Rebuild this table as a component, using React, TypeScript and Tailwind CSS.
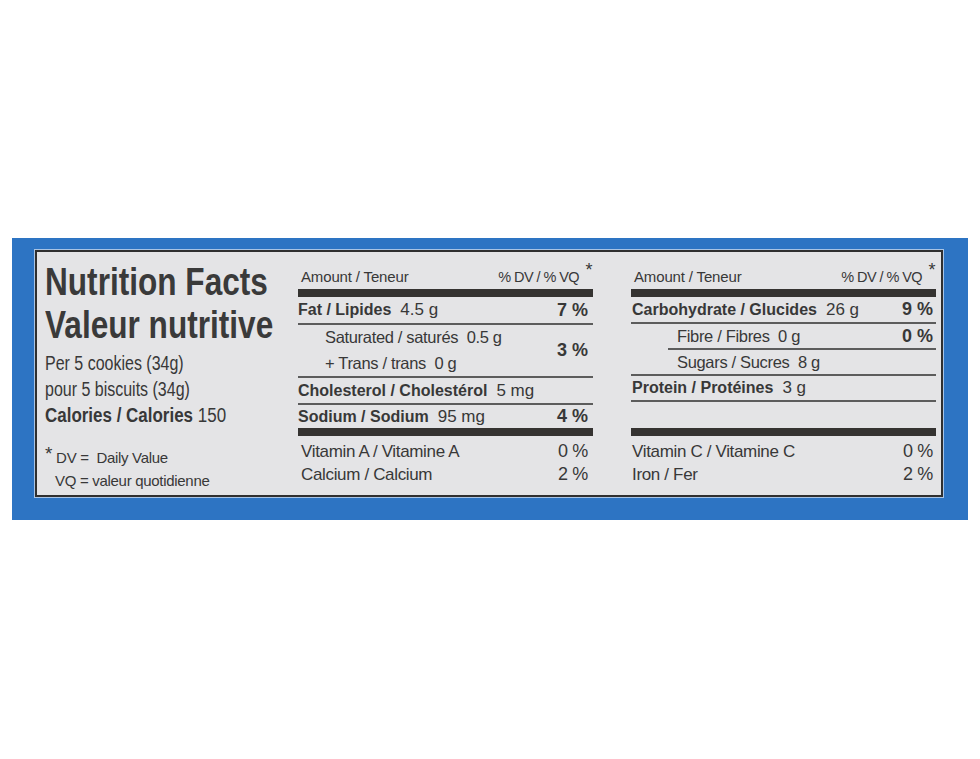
import type { ReactNode } from "react";

// Étiquette "Nutrition Facts / Valeur nutritive" sur bandeau bleu.

function TableHeader() {
  return (
    <div className="flex h-[37px] items-end justify-between pb-[4px] text-[14.5px] leading-[16px]">
      <span className="pl-[3px] text-[15px] tracking-[-0.01em]">Amount / Teneur</span>
      <span className="relative pr-[14px] tracking-[-0.04em]">
        % DV / % VQ
        <span className="absolute -top-[7px] right-[1px] text-[18px]">*</span>
      </span>
    </div>
  );
}

function Bar() {
  return <div className="h-[8px] bg-[#353331]" />;
}

function Label({ name, value }: { name: string; value?: string }) {
  return (
    <span className="whitespace-nowrap">
      <span className="text-[16px] font-bold">{name}</span>
      {value ? <span className="ml-[9px] text-[17px]">{value}</span> : null}
    </span>
  );
}

function Pct({ children, bold = true }: { children: ReactNode; bold?: boolean }) {
  return (
    <span className={bold ? "text-[18px] font-bold" : "text-[18px]"}>
      {children}
    </span>
  );
}

function LeftColumn() {
  return (
    <div className="w-[261px] pl-[8px] pt-[8px]">
      <div className="origin-left scale-x-[0.81] whitespace-nowrap text-[39px] font-bold leading-[43px] text-[#3a3a3a]">
        <div>Nutrition Facts</div>
        <div>Valeur nutritive</div>
      </div>
      <div className="mt-[4px] origin-left scale-x-[0.82] whitespace-nowrap text-[19.5px] leading-[26px]">
        <div>Per 5 cookies (34g)</div>
        <div>pour 5 biscuits (34g)</div>
      </div>
      <div className="origin-left scale-x-[0.87] whitespace-nowrap text-[19.5px] leading-[27px]">
        <span className="font-bold">Calories / Calories</span> 150
      </div>
      <div className="mt-[16px] whitespace-nowrap text-[15px] leading-[23px] tracking-[-0.02em]">
        <div>
          <span className="relative -top-[3px] mr-[4px] text-[19px]">*</span>
          DV = &nbsp;Daily Value
        </div>
        <div className="pl-[10px]">VQ = valeur quotidienne</div>
      </div>
    </div>
  );
}

function MiddleTable() {
  return (
    <div className="w-[295px]">
      <TableHeader />
      <Bar />
      <div className="flex h-[28px] justify-between border-b-2 border-[#5c5c5c] pr-[5px] leading-[26px]">
        <Label name="Fat / Lipides" value="4.5 g" />
        <Pct>7 %</Pct>
      </div>
      <div className="flex h-[53px] items-center justify-between border-b-2 border-[#5c5c5c] pr-[5px]">
        <div className="self-start pl-[27px] text-[16.5px] tracking-[-0.02em]">
          <div className="leading-[25px]">Saturated / saturés &nbsp;0.5 g</div>
          <div className="leading-[26px]">+ Trans / trans &nbsp;0 g</div>
        </div>
        <Pct>3 %</Pct>
      </div>
      <div className="h-[27px] border-b-2 border-[#5c5c5c] leading-[25px]">
        <Label name="Cholesterol / Cholestérol" value="5 mg" />
      </div>
      <div className="flex h-[23px] justify-between pr-[5px] leading-[23px]">
        <Label name="Sodium / Sodium" value="95 mg" />
        <Pct>4 %</Pct>
      </div>
      <Bar />
      <div className="pt-[4px] pl-[3px] pr-[5px] text-[17px] leading-[23px] tracking-[-0.02em]">
        <div className="flex justify-between">
          <span>Vitamin A / Vitamine A</span>
          <Pct bold={false}>0 %</Pct>
        </div>
        <div className="flex justify-between">
          <span>Calcium / Calcium</span>
          <Pct bold={false}>2 %</Pct>
        </div>
      </div>
    </div>
  );
}

function RightTable() {
  return (
    <div className="ml-[38px] w-[305px]">
      <TableHeader />
      <Bar />
      <div className="flex h-[27px] justify-between border-b-2 border-[#5c5c5c] pl-[1px] pr-[3px] leading-[25px]">
        <Label name="Carbohydrate / Glucides" value="26 g" />
        <Pct>9 %</Pct>
      </div>
      <div className="ml-[37px] flex h-[26px] justify-between border-b-2 border-[#5c5c5c] pl-[9px] pr-[3px] leading-[24px]">
        <span className="text-[16.5px] tracking-[-0.02em]">Fibre / Fibres &nbsp;0 g</span>
        <Pct>0 %</Pct>
      </div>
      <div className="h-[26px] border-b-2 border-[#5c5c5c] pl-[46px] text-[16.5px] leading-[24px] tracking-[-0.02em]">
        Sugars / Sucres &nbsp;8 g
      </div>
      <div className="h-[26px] border-b-2 border-[#5c5c5c] pl-[1px] leading-[24px]">
        <Label name="Protein / Protéines" value="3 g" />
      </div>
      <div className="h-[26px]" />
      <Bar />
      <div className="pt-[4px] pl-[1px] pr-[3px] text-[17px] leading-[23px] tracking-[-0.02em]">
        <div className="flex justify-between">
          <span>Vitamin C / Vitamine C</span>
          <Pct bold={false}>0 %</Pct>
        </div>
        <div className="flex justify-between">
          <span>Iron / Fer</span>
          <Pct bold={false}>2 %</Pct>
        </div>
      </div>
    </div>
  );
}

export default function App() {
  return (
    <div className="min-h-[759px] w-[980px] bg-white pl-[12px] pt-[238px] font-['Liberation_Sans',Arial,sans-serif] text-[#383838]">
      <div className="h-[282px] w-[956px] bg-[#2d74c3] pl-[23px] pt-[12px]">
        <div className="flex h-[247px] w-[908px] border-2 border-[#2f2f2f] bg-[#e4e4e6] shadow-[0_0_0_1px_#a9c4e4]">
          <LeftColumn />
          <MiddleTable />
          <RightTable />
        </div>
      </div>
    </div>
  );
}
